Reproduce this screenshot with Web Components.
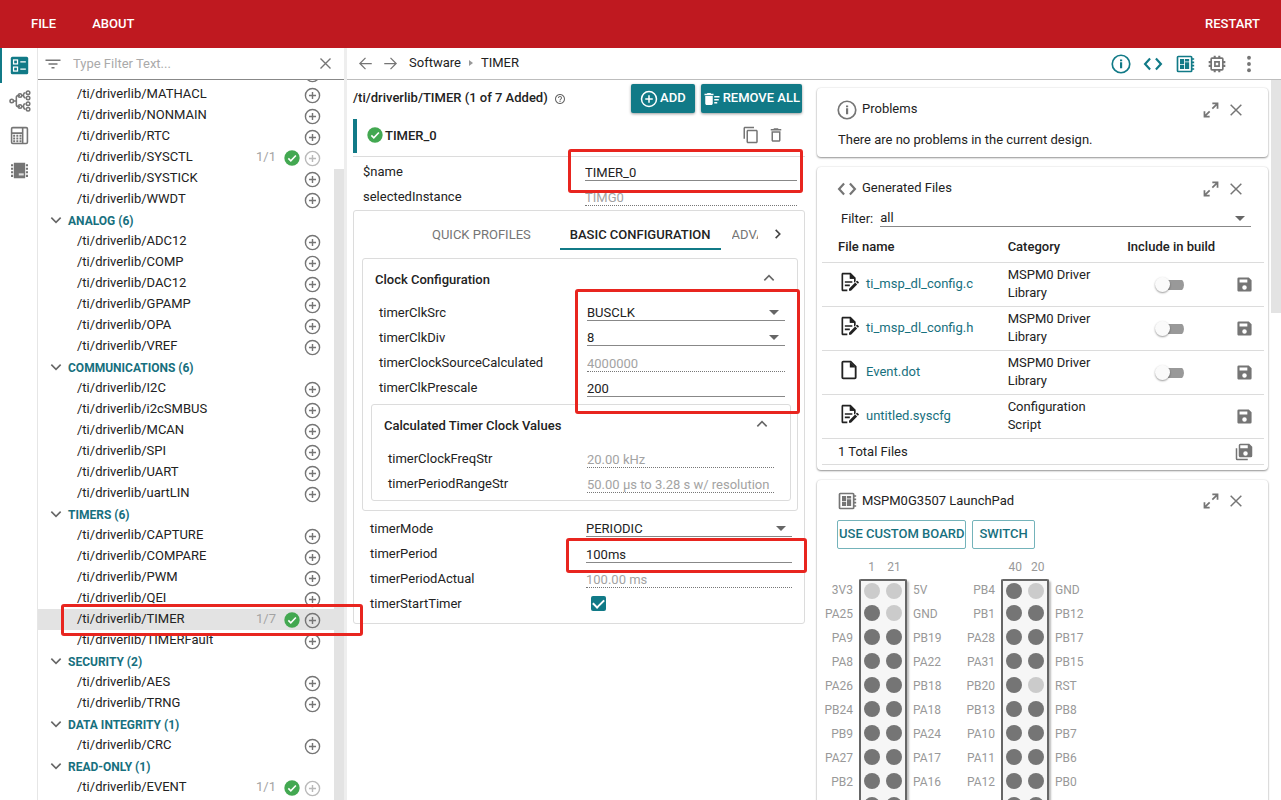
<!DOCTYPE html>
<html lang="en">
<head>
<meta charset="utf-8">
<title>SysConfig</title>
<style>
  html, body { margin: 0; height: 100%; }
  body {
    --teal: #117a87; --teal-text: #17707e; --red: #bf1920; --ink: #222; --muted: #a3a3a3; --grey: #757575; --line: #dcdcdc;
    font: 13px/21px Roboto, "Liberation Sans", sans-serif; color: var(--ink); background: #fff; overflow: hidden;
  }
</style>
</head>
<body>
<sys-app></sys-app>
<script>
const BASE = `*{box-sizing:border-box} button,input,select{font:inherit;color:inherit;margin:0;padding:0;border:0;background:none;outline:0;border-radius:0} button{cursor:pointer;display:flex;align-items:center;justify-content:center} ul{list-style:none;margin:0;padding:0} h2,h3,p{margin:0;font:inherit} [hidden]{display:none!important}`;

function define(name, css, render, after) {
  customElements.define(name, class extends HTMLElement {
    connectedCallback() {
      if (this.shadowRoot) return;
      const root = this.attachShadow({ mode: 'open' });
      root.innerHTML = `<style>${BASE}${css}</style>${render(this)}`;
      if (after) after(root, this);
    }
  });
}
const attr = (el, n, d = '') => el.getAttribute(n) ?? d;

/* Icons: 24-unit view box; filled unless wrapped in S() */
const S = (w, body) => `<g fill="none" stroke="currentColor" stroke-width="${w}">${body}</g>`;
const P = d => `<path d="${d}"/>`;
const BOARD = P('M4 2h15a2 2 0 0 1 2 2v1h2v2h-2v2h2v2h-2v2h2v2h-2v2h2v2h-2v1a2 2 0 0 1-2 2H4a2 2 0 0 1-2-2V4a2 2 0 0 1 2-2zm0 2v16h15V4zm2 2h5v6H6zm6 0h5v3h-5zm0 4h5v8h-5zM6 13h5v5H6z');
const DOC_EDIT = P('M4 1h10l6 6v4l-2 2V8h-5V3H5v18h5v2H4a2 2 0 0 1-1-2V3a2 2 0 0 1 1-2zM7 11h9v2H7zM7 15h6v2H7z') + P('M13 2v6h6z') + P('M12 20l7.4-7.4 2.4 2.4-7.4 7.4H12zM20.2 11.8l1-1a.8.8 0 0 1 1.1 0l1.3 1.3a.8.8 0 0 1 0 1.1l-1 1z');
const ICONS = {
  filter: P('M10 18h4v-2h-4v2zM2 6v2h20V6zm4 7h12v-2H6v2z'),
  close: S(2.2, '<path d="M4 4l16 16M20 4L4 20"/>'),
  add: S(2, '<circle cx="12" cy="12" r="10"/><path d="M12 7v10M7 12h10"/>'),
  check: '<circle cx="12" cy="12" r="11.5" fill="#43a851"/><path d="M6.5 12.5l3.7 3.7 7.6-8" fill="none" stroke="#fff" stroke-width="2.4"/>',
  down: S(2.4, '<path d="M5 8.5l7 7 7-7"/>'),
  up: S(2.4, '<path d="M5 15.5l7-7 7 7"/>'),
  right: S(2.8, '<path d="M8 5l7 7-7 7"/>'),
  back: S(2, '<path d="M22 12H3M12 3l-9 9 9 9"/>'),
  forward: S(2, '<path d="M2 12h19M12 3l9 9-9 9"/>'),
  help: P('M11 18h2v-2h-2v2zm1-16C6.48 2 2 6.48 2 12s4.48 10 10 10 10-4.48 10-10S17.52 2 12 2zm0 18c-4.41 0-8-3.59-8-8s3.59-8 8-8 8 3.59 8 8-3.59 8-8 8zm0-14c-2.21 0-4 1.79-4 4h2c0-1.1.9-2 2-2s2 .9 2 2c0 2-3 1.75-3 5h2c0-2.25 3-2.5 3-5 0-2.21-1.79-4-4-4z'),
  sweep: P('M15 16h4v2h-4zm0-8h7v2h-7zm0 4h6v2h-6zM3 18c0 1.1.9 2 2 2h6c1.1 0 2-.9 2-2V8H3v10zM14 5h-3l-1-1H6L5 5H2v2h12z'),
  copy: P('M16 1H4c-1.1 0-2 .9-2 2v14h2V3h12V1zm3 4H8c-1.1 0-2 .9-2 2v14c0 1.1.9 2 2 2h11c1.1 0 2-.9 2-2V7c0-1.1-.9-2-2-2zm0 16H8V7h11v14z'),
  trash: P('M6 19c0 1.1.9 2 2 2h8c1.1 0 2-.9 2-2V7H6v12zM8 9h8v10H8V9zm7.5-5l-1-1h-5l-1 1H5v2h14V4h-3.5z'),
  info: S(2, '<circle cx="12" cy="12" r="10.5"/>') + P('M10.8 10h2.600v7h-2.600zM10.800 6.500h2.600v2.300h-2.600z'),
  code: S(2.6, '<path d="M8.500 5.500L2.500 12l6 6.500M15.500 5.500l6 6.500-6 6.500"/>'),
  board: BOARD,
  chip: P('M15.500 8.500h-7v7h7zm-2 5h-3v-3h3zM22 11V8.500h-2V6a2 2 0 0 0-2-2h-2V2h-2.500v2h-3V2H8v2H6a2 2 0 0 0-2 2v2.500H2V11h2v2H2v2.500h2V18a2 2 0 0 0 2 2h2v2h2.500v-2h3v2H16v-2h2a2 2 0 0 0 2-2v-2.500h2V13h-2v-2zm-4 7H6V6h12z'),
  more: '<circle cx="12" cy="4.500" r="2.300"/><circle cx="12" cy="12" r="2.300"/><circle cx="12" cy="19.500" r="2.300"/>',
  expand: S(2.6, '<path d="M14 10l8-8M14 2.200h7.800V10M10 14l-8 8M2.200 14v7.800H10"/>'),
  save: P('M18 2H4a2 2 0 0 0-2 2v16c0 1.100.9 2 2 2h16a2 2 0 0 0 2-2V6zm-6 17.500a3.200 3.200 0 1 1 0-6.400 3.200 3.200 0 0 1 0 6.400zM16 9H5V5h11z'),
  saveall: P('M17,7V3H7V7H17M14,17A3,3 0 0,0 17,14A3,3 0 0,0 14,11A3,3 0 0,0 11,14A3,3 0 0,0 14,17M19,1L23,5V17A2,2 0 0,1 21,19H7C5.890,19 5,18.100 5,17V3A2,2 0 0,1 7,1H19M1,7H3V21H17V23H3A2,2 0 0,1 1,21V7Z'),
  docedit: DOC_EDIT,
  doc: S(2.2, '<path d="M4 3v18q0 1 1 1h14q1 0 1-1V8l-6-6H5Q4 2 4 3z"/>') + P('M13 2v7h7z'),
  modules: '<rect x="1" y="1" width="22" height="22" rx="2" fill="#117a87"/><g fill="none" stroke="#fff" stroke-width="1.600"><rect x="4.500" y="5" width="5" height="5"/><rect x="4.500" y="14" width="5" height="5"/><path d="M13 7.500h7M13 16.500h7"/></g>',
  tree: S(1.7, '<path d="M5 12h3M12 6h-2q-2 0-2 2v8q0 2 2 2h2M14 6h1q1 0 1-1.500T18 3M16 6q0 2.500 2 2.500M14 18h1q1 0 1-1.500t2-1.500M16 18q0 3 2 3"/><circle cx="3" cy="12" r="1.900"/><circle cx="12" cy="6" r="1.900"/><circle cx="12" cy="18" r="1.900"/><circle cx="20.800" cy="3" r="1.900"/><circle cx="20.800" cy="8.800" r="1.900"/><circle cx="20.800" cy="15" r="1.900"/><circle cx="20.800" cy="21" r="1.900"/>'),
  calc: S(2, '<rect x="2" y="2" width="20" height="20" rx="1.500"/><path d="M16 2v20M2 9h14"/>') + P('M4 11h2.500v2.500H4zM8 11h2.500v2.500H8zM12 11h2.500v2.500H12zM4 14.500h2.500V17H4zM8 14.500h2.500V17H8zM12 14.500h2.500V17H12zM4 18h2.500v2.500H4zM8 18h2.500v2.500H8zM12 18h2.500v2.500H12z'),
  ic: P('M4 1h16v22H4zM0 3h3v3H0zM0 8h3v3H0zM0 13h3v3H0zM0 18h3v3H0zM21 3h3v3h-3zM21 8h3v3h-3zM21 13h3v3h-3zM21 18h3v3h-3z') + '<path d="M11 16h7v3h-7z" fill="#ddd"/>'
};
define('ui-icon', ':host{display:inline-flex;flex:none;width:var(--size,18px);height:var(--size,18px)} svg{display:block;width:100%;height:100%;fill:currentColor}',
  el => `<svg viewBox="0 0 24 24" aria-hidden="true">${ICONS[attr(el, 'name')]}</svg>`,
  (r, el) => { if (el.hasAttribute('size')) el.style.setProperty('--size', attr(el, 'size') + 'px'); });

define('top-bar', `:host{display:flex;flex:none;height:48px;background:var(--red);color:#fff;align-items:center;padding:0 21px 2px 31px;gap:36px;font-weight:500}
  button:last-child{margin-left:auto}`,
  () => '<button>FILE</button><button>ABOUT</button><button>RESTART</button>');

define('side-rail', `:host{display:flex;flex-direction:column;border-right:1px solid #e6e6e6;color:var(--grey)}
  button{height:35px;width:100%;border-left:2px solid transparent} .on{border-color:var(--teal)}`,
  () => `<button class="on" aria-label="Modules"><ui-icon name="modules" size="19"></ui-icon></button>
  <button aria-label="Clock tree"><ui-icon name="tree" size="22"></ui-icon></button>
  <button aria-label="Tools"><ui-icon name="calc" size="19"></ui-icon></button>
  <button aria-label="Device"><ui-icon name="ic" size="17"></ui-icon></button>`);

define('tree-item', `:host{display:flex;height:21px;padding:0 13px 0 39px;align-items:flex-start;line-height:20px}
  :host([selected]){background:#e3e3e3}
  span{flex:1;white-space:nowrap} em{font-style:normal;color:var(--muted);margin-right:8px}
  ui-icon{color:var(--grey);margin:3px 0 0} ui-icon[name=check]{margin-right:4px} button{height:21px;align-items:flex-start} button ui-icon{margin-top:3px} :host([full]) button{opacity:.5}`,
  el => `<span><slot></slot></span>${el.hasAttribute('count') ? `<em>${attr(el, 'count')}</em><ui-icon name="check" size="16"></ui-icon>` : ''}<button aria-label="Add"><ui-icon name="add" size="17"></ui-icon></button>`);

define('tree-group', `:host{display:block} button{height:21px;padding:1px 0 0 10px;gap:4px;color:var(--teal-text);font-weight:700;font-size:12px} ui-icon{color:#666;margin-bottom:2px}`,
  el => `<button aria-expanded="true"><ui-icon name="down" size="16"></ui-icon>${attr(el, 'label')}</button><slot></slot>`);

const GROUPS = [
  ['ANALOG (6)', ['ADC12', 'COMP', 'DAC12', 'GPAMP', 'OPA', 'VREF']],
  ['COMMUNICATIONS (6)', ['I2C', 'i2cSMBUS', 'MCAN', 'SPI', 'UART', 'uartLIN']],
  ['TIMERS (6)', ['CAPTURE', 'COMPARE', 'PWM', 'QEI', 'TIMER', 'TIMERFault']],
  ['SECURITY (2)', ['AES', 'TRNG']], ['DATA INTEGRITY (1)', ['CRC']], ['READ-ONLY (1)', ['EVENT']]];
const STATE = { SYSCTL: 'count="1/1" full', TIMER: 'count="1/7" selected', EVENT: 'count="1/1" full' };
const item = n => `<tree-item ${STATE[n] || ''}>/ti/driverlib/${n}</tree-item>`;

define('module-tree', `:host{display:flex;flex-direction:column;min-width:0;min-height:0}
  .filter{display:flex;flex:none;height:32px;border-bottom:1px solid #888;align-items:center;padding:0 11px 0 6px;gap:11px;color:var(--grey)}
  input{flex:1;min-width:0;line-height:20px} input::placeholder{color:#aaa}
  .body{flex:1;min-height:0;display:flex} .list{flex:1;min-width:0;overflow:hidden}
  .bar{flex:none;width:10px;padding-top:89px;display:flex} .bar i{flex:1;background:#e3e3e3}`,
  () => `<div class="filter"><ui-icon name="filter"></ui-icon><input type="text" placeholder="Type Filter Text..." aria-label="Type Filter Text"><button aria-label="Clear"><ui-icon name="close" size="15"></ui-icon></button></div>
  <div class="body"><div class="list"><tree-item></tree-item>${['MATHACL', 'NONMAIN', 'RTC', 'SYSCTL', 'SYSTICK', 'WWDT'].map(item).join('')}
  ${GROUPS.map(([l, m]) => `<tree-group label="${l}">${m.map(item).join('')}</tree-group>`).join('')}<tree-item></tree-item></div><div class="bar"><i></i></div></div>`,
  r => requestAnimationFrame(() => { r.querySelector('.list').scrollTop = 17; }));

define('main-toolbar', `:host{display:flex;flex:none;height:32px;border-bottom:1px solid #bdbdbd;align-items:center;padding:0 22px 0 11px;color:var(--grey)}
  nav{display:flex;align-items:center;color:var(--ink);gap:8px;margin-left:11px;padding-bottom:2px} nav i{border:3px solid transparent;border-left:4px solid #999;border-right:0}
  .nav{margin-right:10px} .tools{display:flex;margin-left:auto;gap:12px} .on{color:var(--teal)}
  a{color:inherit;text-decoration:none}`,
  () => `<button class="nav" aria-label="Back"><ui-icon name="back" size="15"></ui-icon></button><button aria-label="Forward"><ui-icon name="forward" size="15"></ui-icon></button>
  <nav><a href="#software">Software</a><i></i><span>TIMER</span></nav>
  <div class="tools"><button class="on" aria-label="Problems"><ui-icon name="info" size="20"></ui-icon></button><button class="on" aria-label="Generated files"><ui-icon name="code" size="20"></ui-icon></button><button class="on" aria-label="Board"><ui-icon name="board" size="20"></ui-icon></button><button aria-label="Device"><ui-icon name="chip" size="20"></ui-icon></button><button aria-label="More"><ui-icon name="more" size="20"></ui-icon></button></div>`);

/* One labelled setting: text box, drop-down or tick box */
define('config-field', `:host{display:grid;grid-template-columns:var(--label,216px) minmax(0,1fr);height:25px;padding:0 var(--end,12px) 0 var(--start,16px)}
  label{line-height:26px;white-space:nowrap}
  input[type=text]{width:100%;height:18px;margin-top:4px;padding-top:2px;border-bottom:1px solid #888;line-height:15px}
  input[type=text]:disabled{color:var(--muted);border-bottom:1px dotted #777}
  .sel{position:relative;height:17px;margin-top:4px;border-bottom:1px solid #888;display:flex}
  select{appearance:none;width:100%;height:16px;padding-top:1px;line-height:15px}
  .sel::after{content:"";align-self:center;flex:none;margin:0 6px 0 -16px;border:5px solid transparent;border-top-color:#666;border-bottom:0;pointer-events:none}
  input[type=checkbox]{appearance:none;width:15px;height:15px;margin:5px 0 0 5px;border-radius:2px;background:var(--teal);display:grid;place-items:center}
  input[type=checkbox]:checked::after{content:"";width:9px;height:5px;border:solid #fff;border-width:0 0 2px 2px;rotate:-45deg;margin-bottom:3px}`,
  el => { const l = attr(el, 'label'), v = attr(el, 'value'), k = attr(el, 'kind', 'text');
    return `<label for="f">${l}</label>` + (k === 'select' ? `<div class="sel"><select id="f"><option>${v}</option></select></div>` : k === 'check' ? '<input id="f" type="checkbox" checked>' : `<input id="f" type="text" value="${v}"${el.hasAttribute('disabled') ? ' disabled' : ''}>`); });

define('config-group', `:host{display:block;border:1px solid var(--line);border-radius:3px}
  header{display:flex;height:41px;align-items:center;justify-content:space-between;padding:0 20px 0 12px;font-weight:500} header button{margin-bottom:4px;color:#666}`,
  el => `<header><h3>${attr(el, 'label')}</h3><button aria-label="Collapse"><ui-icon name="up" size="16"></ui-icon></button></header><slot></slot>`);

define('tab-strip', `:host{display:flex;height:39px;padding-left:66px;color:var(--grey)}
  button{flex:none;height:39px;padding:9px 12px 0;border-bottom:2px solid transparent;white-space:nowrap} .on{margin-left:17px;padding:9px 10px 0;color:var(--ink);border-color:var(--teal);font-weight:500}
  .clip{width:26px;margin-left:11px;padding:9px 0 0;justify-content:flex-start;overflow:hidden}
  .next{margin-left:12px;padding:9px 0 0;width:16px;color:#444}`,
  () => '<button role="tab">QUICK PROFILES</button><button role="tab" class="on" aria-selected="true">BASIC CONFIGURATION</button><button role="tab" class="clip">ADVANCED</button><button class="next" aria-label="Next tabs"><ui-icon name="right" size="14"></ui-icon></button>');

define('solid-button', `:host{display:block} button{height:29px;width:100%;padding:0 var(--pad,9px) 2px;background:var(--teal);color:#fff;border-radius:2px;font-weight:500;gap:2px;box-shadow:0 1px 3px #0006;white-space:nowrap} ui-icon{margin-top:2px}`,
  el => `<button><ui-icon name="${attr(el, 'icon')}" size="18"></ui-icon><slot></slot></button>`);

define('config-panel', `:host{display:flex;flex-direction:column;min-width:0;padding:4px 6px 0 6px}
  .head{display:flex;gap:6px;margin-bottom:6px} .head h2{flex:1;height:29px;padding-bottom:2px;font-weight:500;white-space:nowrap;display:flex;align-items:center;gap:6px} .head ui-icon{color:#666;margin-top:3px}
  .head solid-button:last-child{--pad:2px;margin-right:3px}
  .inst{display:flex;height:34px;border-left:4px solid var(--teal);align-items:center;padding:0 20px 2px 10px;gap:2px;margin-bottom:3px} .inst h3{flex:1;font-weight:500} .inst button{color:var(--grey);margin-left:5px}
  .top{border-top:1px solid var(--line);padding:2px 0 1px;--start:10px;--end:8px;--label:222px}
  .card{border:1px solid var(--line);border-radius:3px;padding-bottom:7px}
  .clock{margin:8px 6px 5px 8px;--label:208px;padding-bottom:9px}
  .calc{margin:4px 6px 0 8px;--label:199px;--end:16px;padding-bottom:4px}`,
  () => `<div class="head"><h2>/ti/driverlib/TIMER (1 of 7 Added)<ui-icon name="help" size="12"></ui-icon></h2><solid-button icon="add">ADD</solid-button><solid-button icon="sweep">REMOVE ALL</solid-button></div>
  <div class="inst"><ui-icon name="check" size="16"></ui-icon><h3>TIMER_0</h3><button aria-label="Duplicate"><ui-icon name="copy" size="18"></ui-icon></button><button aria-label="Delete"><ui-icon name="trash" size="18"></ui-icon></button></div>
  <div class="top"><config-field label="$name" value="TIMER_0"></config-field><config-field label="selectedInstance" value="TIMG0" disabled></config-field></div>
  <div class="card"><tab-strip></tab-strip>
    <config-group class="clock" label="Clock Configuration">
      <config-field kind="select" label="timerClkSrc" value="BUSCLK"></config-field><config-field kind="select" label="timerClkDiv" value="8"></config-field>
      <config-field label="timerClockSourceCalculated" value="4000000" disabled></config-field><config-field label="timerClkPrescale" value="200"></config-field>
      <config-group class="calc" label="Calculated Timer Clock Values"><config-field label="timerClockFreqStr" value="20.00 kHz" disabled></config-field><config-field label="timerPeriodRangeStr" value="50.00 µs to 3.28 s w/ resolution" disabled></config-field></config-group>
    </config-group>
    <config-field kind="select" label="timerMode" value="PERIODIC"></config-field><config-field label="timerPeriod" value="100ms"></config-field>
    <config-field label="timerPeriodActual" value="100.00 ms" disabled></config-field><config-field kind="check" label="timerStartTimer"></config-field>
  </div>`);

define('info-card', `:host{display:block;flex:none;border-radius:4px;background:#fff;box-shadow:0 1px 2px #0006,0 0 2px #0002}
  header{display:flex;height:43px;align-items:center;padding:0 24px 0 20px;color:var(--grey)} h2{flex:1;margin-left:5px;padding-bottom:2px;color:var(--ink)} header button{margin-left:9px}`,
  el => `<header><ui-icon name="${attr(el, 'icon')}" size="20"></ui-icon><h2>${attr(el, 'label')}</h2><button aria-label="Expand"><ui-icon name="expand" size="16"></ui-icon></button><button aria-label="Close"><ui-icon name="close" size="16"></ui-icon></button></header><slot></slot>`);

const FILES = [['ti_msp_dl_config.c', 'MSPM0 Driver Library', 1, 'docedit'], ['ti_msp_dl_config.h', 'MSPM0 Driver Library', 1, 'docedit'], ['Event.dot', 'MSPM0 Driver Library', 1, 'doc'], ['untitled.syscfg', 'Configuration Script', 0, 'docedit']];
define('file-table', `:host{display:block;padding:0 4px 5px 5px}
  .filter{display:flex;padding:0 13px 0 19px;gap:7px;height:17px;line-height:18px} .sel{flex:1;display:flex;border-bottom:1px solid #888} select{appearance:none;width:100%;height:16px;line-height:16px}
  .sel::after{content:"";align-self:center;flex:none;margin:0 6px 0 -16px;border:5px solid transparent;border-top-color:#666;border-bottom:0;pointer-events:none}
  table{width:100%;border-collapse:collapse;table-layout:fixed} th,td{padding:0;text-align:left;height:44px;border-bottom:1px solid var(--line);line-height:18px} th{height:35px;padding-top:5px;font-weight:500}
  th:first-child,tfoot td:first-child{padding-left:16px} tfoot td{height:26px;padding-top:2px} .n{width:42%} .c{width:24%} .s{width:8%}
  .c div{width:92px} .i{text-align:center} td.i{padding-right:4px} th.i{white-space:nowrap} .s button{margin:0 11px 0 auto;color:var(--grey)}
  td.n a{display:flex;align-items:center;gap:7px;padding-left:17px;color:var(--teal-text);text-decoration:none} a ui-icon{color:#222;margin-bottom:4px}
  input{appearance:none;width:29px;height:16px;background:linear-gradient(#999,#999) right center/24px 10px no-repeat;border-radius:8px;display:inline-flex;vertical-align:middle;align-items:center}
  input::before{content:"";width:15px;height:15px;border-radius:50%;background:#fafafa;box-shadow:0 1px 2px #0006}`,
  () => `<div class="filter"><label for="f">Filter:</label><div class="sel"><select id="f"><option>all</option></select></div></div>
  <table><thead><tr><th class="n">File name</th><th class="c">Category</th><th class="i">Include in build</th><th class="s"></th></tr></thead><tbody>
  ${FILES.map(([n, c, t, i]) => `<tr><td class="n"><a href="#${n}"><ui-icon name="${i}" size="20"></ui-icon>${n}</a></td><td class="c"><div>${c}</div></td><td class="i">${t ? `<input type="checkbox" role="switch" aria-label="Include ${n}">` : ''}</td><td class="s"><button aria-label="Save ${n}"><ui-icon name="save" size="17"></ui-icon></button></td></tr>`).join('')}
  </tbody><tfoot><tr><td colspan="3">1 Total Files</td><td class="s"><button aria-label="Save all"><ui-icon name="saveall" size="18"></ui-icon></button></td></tr></tfoot></table>`);

/* Two-column pin connector; `off` lists the dots drawn pale, numbered row by row */
define('pin-header', `:host{display:grid;grid-template-columns:var(--left,36px) 48px auto;column-gap:6px;color:#999;font-size:12px;line-height:24px}
  .nums{grid-column:2;display:flex;justify-content:space-around;padding-left:3px;line-height:16px;height:20px} ul{margin-top:-1px} .l{grid-column:1;text-align:right}
  .box{border:2px solid #666;border-bottom:0;border-radius:2px;background:#f6f6f6;box-shadow:2px 2px 2px #0004;display:grid;grid-template-columns:16px 16px;grid-template-rows:20px;grid-auto-rows:24px;column-gap:6px;justify-content:center;align-items:center}
  .box i{width:16px;height:16px;border-radius:50%;background:#757575} .box i.off{background:#cbcbcb}`,
  el => { const L = attr(el, 'left').split(' '), R = attr(el, 'right').split(' '), off = attr(el, 'off').split(' '), [a, b] = attr(el, 'nums').split(' ');
    const li = a => `<ul class="${a === L ? 'l' : ''}">${a.map(x => `<li>${x}</li>`).join('')}</ul>`;
    return `<div class="nums"><span>${a}</span><span>${b}</span></div>${li(L)}<div class="box">${Array.from({ length: (L.length + 1) * 2 }, (_, i) => `<i${off.includes(String(i)) ? ' class="off"' : ''}></i>`).join('')}</div>${li(R)}`; });

define('launch-board', `:host{display:block;height:330px}
  .buttons{display:flex;gap:6px;padding:0 20px;margin-bottom:10px;margin-top:-3px} .buttons button{height:29px;border:1px solid #74b3ba;border-radius:2px;color:var(--teal-text);font-weight:500;padding:0 1px 2px} .buttons button+button{padding:0 6px 2px}
  .pins{display:flex} pin-header:first-child{width:142px}`,
  () => `<div class="buttons"><button>USE CUSTOM BOARD</button><button>SWITCH</button></div><div class="pins">
  <pin-header nums="1 21" left="3V3 PA25 PA9 PA8 PA26 PB24 PB9 PA27 PB2" right="5V GND PB19 PA22 PB18 PA18 PA24 PA17 PA16" off="0 1 3"></pin-header>
  <pin-header nums="40 20" left="PB4 PB1 PA28 PA31 PB20 PB13 PA10 PA11 PA12" right="GND PB12 PB17 PB15 RST PB8 PB7 PB6 PB0" off="1 9"></pin-header></div>`);

define('info-column', `:host{display:flex;min-width:0;min-height:0}
  .cards{flex:1;min-width:0;display:flex;flex-direction:column;gap:10px;padding:8px 3px 0 6px;overflow:hidden} p{padding:0 21px 8px;line-height:18px}
  .bar{flex:none;width:10px;display:flex;align-items:flex-start} .bar i{flex:1;height:233px;background:#e3e3e3}`,
  () => `<div class="cards"><info-card icon="info" label="Problems"><p>There are no problems in the current design.</p></info-card>
  <info-card icon="code" label="Generated Files"><file-table></file-table></info-card>
  <info-card icon="board" label="MSPM0G3507 LaunchPad"><launch-board></launch-board></info-card></div><div class="bar"><i></i></div>`);

/* Red call-out frames drawn over the interface */
define('callout-frame', ':host{position:absolute;border:3px solid #e8251f;border-radius:3px;box-sizing:border-box;pointer-events:none}', () => '');

define('sys-app', `:host{display:flex;flex-direction:column;height:100vh;position:relative;overflow:hidden}
  main{flex:1;min-height:0;display:grid;grid-template-columns:38px minmax(0,306fr) 3px minmax(0,934fr)}
  .split{background:#eee} .work{display:flex;flex-direction:column;min-width:0;min-height:0} .cols{flex:1;min-height:0;display:grid;grid-template-columns:minmax(0,464fr) minmax(0,470fr)}`,
  () => `<top-bar></top-bar><main><side-rail></side-rail><module-tree></module-tree><div class="split"></div><div class="work"><main-toolbar></main-toolbar><div class="cols"><config-panel></config-panel><info-column></info-column></div></div></main>
  ${[[568, 149, 235, 44], [575, 289, 225, 125], [566, 538, 241, 35], [61, 604, 302, 32]].map(([x, y, w, h]) => `<callout-frame style="left:${x}px;top:${y}px;width:${w}px;height:${h}px"></callout-frame>`).join('')}`);
</script>
</body>
</html>
